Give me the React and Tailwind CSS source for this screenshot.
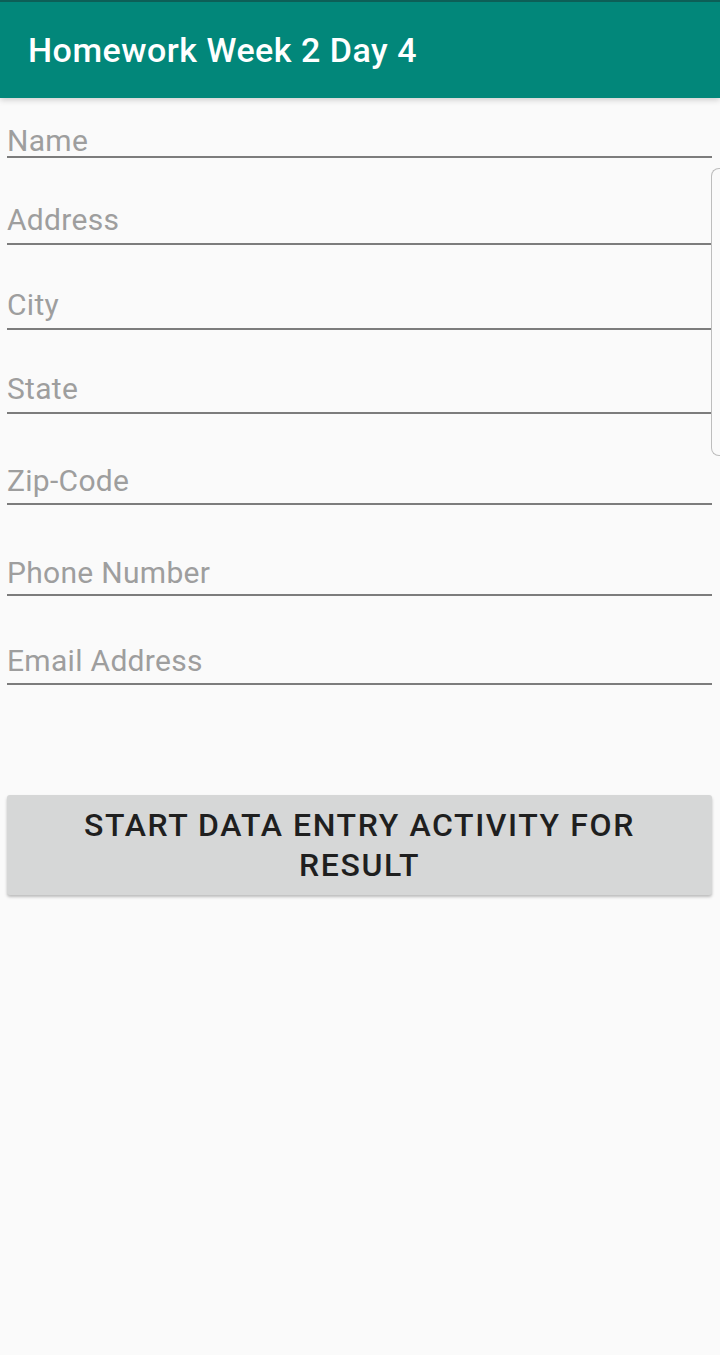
import React from 'react';

const fields = [
  { label: 'Name', h: 'h-[60px]', pb: 'pb-0' },
  { label: 'Address', h: 'h-[87px]', pb: 'pb-[8px]' },
  { label: 'City', h: 'h-[85px]', pb: 'pb-[8px]' },
  { label: 'State', h: 'h-[84px]', pb: 'pb-[8px]' },
  { label: 'Zip-Code', h: 'h-[91px]', pb: 'pb-[7px]' },
  { label: 'Phone Number', h: 'h-[91px]', pb: 'pb-[6px]' },
  { label: 'Email Address', h: 'h-[89px]', pb: 'pb-[7px]' },
];

export default function App() {
  return (
    <div className="relative w-[720px] h-[1355px] bg-[#fafafa] font-['Roboto',sans-serif] overflow-hidden">
      <header className="relative z-10 h-[98px] bg-[#02877a] border-t-2 border-[#0d5f57] flex items-center px-[28px] shadow-[0_2px_6px_rgba(0,0,0,0.18)]">
        <h1 className="text-[34px] font-medium text-white leading-none tracking-[0.5px]">
          Homework Week 2 Day 4
        </h1>
      </header>

      <div className="flex flex-col pl-[7px] pr-[8px]">
        {fields.map((f) => (
          <div
            key={f.label}
            className={`${f.h} flex items-end border-b-2 border-[#7c7c7c]`}
          >
            <span className={`${f.pb} text-[30px] leading-[30px] tracking-[0.3px] text-[#9e9e9e]`}>
              {f.label}
            </span>
          </div>
        ))}

        <button className="mt-[110px] h-[100px] w-full bg-[#d6d7d7] rounded-[3px] shadow-[0_2px_3px_rgba(0,0,0,0.25)] flex items-center justify-center px-[40px]">
          <span className="text-[32px] leading-[40px] font-medium tracking-[1.6px] text-[#1f1f1f] uppercase text-center">
            Start data entry activity for result
          </span>
        </button>
      </div>

      <div className="absolute right-0 top-[168px] w-[9px] h-[288px] border border-r-0 border-[#bdbdbd] rounded-l-[8px]" />
    </div>
  );
}
